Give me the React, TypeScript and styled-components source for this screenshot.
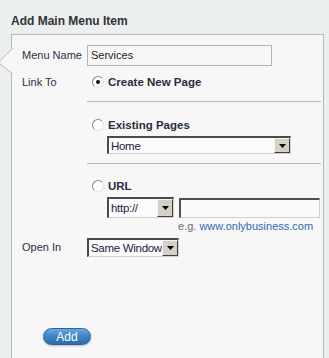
import React from "react";
import styled, { createGlobalStyle } from "styled-components";

const Global = createGlobalStyle`
  html, body { margin: 0; padding: 0; }
  body {
    background: #eceff0;
    font-family: "Liberation Sans", Arial, sans-serif;
    font-size: 11px;
    color: #2b2f3f;
    overflow: hidden;
    width: 329px;
    height: 358px;
  }
`;

const Page = styled.div`
  width: 329px;
  height: 358px;
  overflow: hidden;
`;

const Title = styled.h1`
  margin: 0;
  padding: 14px 0 0 11px;
  height: 20px;
  font-size: 12px;
  line-height: 14px;
  font-weight: bold;
  color: #333;
`;

const Panel = styled.div`
  position: relative;
  margin-left: 11px;
  width: 298px;
  min-height: 340px;
  background: #f7f7f7;
  border: 1px solid #b8b8b8;
  border-bottom: none;
  padding: 10px 3px 0 10px;
  box-sizing: content-box;
`;

const Pointer = styled.svg`
  position: absolute;
  left: -12px;
  top: 13px;
`;

const Row = styled.div<{ $mt?: number }>`
  display: flex;
  align-items: flex-start;
  margin-top: ${(p) => p.$mt ?? 0}px;
`;

const Label = styled.div<{ $h: number }>`
  width: 65px;
  flex: none;
  height: ${(p) => p.$h}px;
  line-height: ${(p) => p.$h}px;
  color: #2b2f45;
`;

const Content = styled.div`
  flex: 1;
  display: flex;
  flex-direction: column;
`;

const FlatInput = styled.div`
  box-sizing: border-box;
  width: 185px;
  height: 21px;
  border: 1px solid #b4b4b4;
  background: #f8f8f8;
  padding-left: 3px;
  line-height: 19px;
  color: #222;
`;

const InsetInput = styled.div<{ $w: number }>`
  box-sizing: border-box;
  width: ${(p) => p.$w}px;
  height: 20px;
  margin-top: 1px;
  border-style: solid;
  border-width: 2px 1px 1px 2px;
  border-color: #505050 #d4d0c8 #d4d0c8 #505050;
  background: #f9f9f9;
`;

const RadioLine = styled.div<{ $mt?: number }>`
  display: flex;
  align-items: center;
  height: 12px;
  margin-left: 5px;
  margin-top: ${(p) => p.$mt ?? 0}px;
`;

const Radio = styled.span<{ $checked?: boolean }>`
  position: relative;
  width: 10px;
  height: 10px;
  border-radius: 50%;
  border: 1px solid;
  border-color: #8a8a8a #e2e2e2 #e2e2e2 #8a8a8a;
  background: #fff;
  flex: none;
  &::after {
    content: "";
    display: ${(p) => (p.$checked ? "block" : "none")};
    position: absolute;
    left: 3px;
    top: 3px;
    width: 4px;
    height: 4px;
    border-radius: 50%;
    background: #111;
  }
`;

const RadioText = styled.span`
  margin-left: 4px;
  font-size: 11.5px;
  font-weight: bold;
  color: #2a2e40;
`;

const Rule = styled.div<{ $mt: number }>`
  height: 1px;
  background: #b8b8b8;
  margin-top: ${(p) => p.$mt}px;
  width: 234px;
`;

const SelectBox = styled.div<{ $w: number; $h: number; $ml?: number; $mt?: number }>`
  display: flex;
  box-sizing: border-box;
  width: ${(p) => p.$w}px;
  height: ${(p) => p.$h}px;
  margin-left: ${(p) => p.$ml ?? 0}px;
  margin-top: ${(p) => p.$mt ?? 0}px;
  border-style: solid;
  border-width: 2px 1px 1px 2px;
  border-color: #4a4a4a #d4d0c8 #d4d0c8 #4a4a4a;
  background: #fbfbfb;
`;

const SelectText = styled.div`
  flex: 1;
  padding-left: 2px;
  display: flex;
  align-items: center;
  color: #1c2240;
  font-size: 11.5px;
  letter-spacing: -0.3px;
  white-space: nowrap;
  overflow: hidden;
`;

const DropButton = styled.div`
  width: 16px;
  flex: none;
  box-sizing: border-box;
  background: #d4d0c8;
  border-style: solid;
  border-width: 1px;
  border-color: #f4f4f4 #404040 #404040 #f4f4f4;
  display: flex;
  align-items: center;
  justify-content: center;
`;

const UrlRow = styled.div`
  display: flex;
  gap: 5px;
  margin-left: 20px;
  margin-top: 5px;
`;

const Hint = styled.div`
  margin-left: 91px;
  margin-top: 2px;
  height: 13px;
  line-height: 13px;
  color: #6a6a6a;
`;

const Link = styled.span`
  color: #2f6db0;
`;

const AddButton = styled.button`
  margin: 71px 0 0 21px;
  width: 48px;
  height: 17px;
  padding: 0;
  border: 1px solid #2c6496;
  border-radius: 9px;
  background: linear-gradient(#6aaade 0%, #3f87c6 45%, #2d6ead 100%);
  box-shadow: 0 1px 2px rgba(0, 0, 0, 0.25);
  color: #fff;
  font-family: "Liberation Sans", Arial, sans-serif;
  font-size: 12px;
  line-height: 14px;
  display: block;
`;

const Arrow = () => (
  <svg width="7" height="4" viewBox="0 0 7 4">
    <polygon points="0,0 7,0 3.5,4" fill="#000" />
  </svg>
);

const Select = ({ value, w, h, ml, mt }: { value: string; w: number; h: number; ml?: number; mt?: number }) => (
  <SelectBox $w={w} $h={h} $ml={ml} $mt={mt}>
    <SelectText>{value}</SelectText>
    <DropButton>
      <Arrow />
    </DropButton>
  </SelectBox>
);

export default function App() {
  return (
    <Page>
      <Global />
      <Title>Add Main Menu Item</Title>
      <Panel>
        <Pointer width="13" height="26" viewBox="0 0 13 26">
          <polygon points="12,0 0,12 12,25" fill="#f7f7f7" />
          <polyline points="12.5,0.5 -1,13.5" stroke="#b8b8b8" fill="none" />
          <polyline points="-1,15.5 12.5,25.5" stroke="#b8b8b8" fill="none" />
        </Pointer>
        <Row>
          <Label $h={21}>Menu Name</Label>
          <FlatInput>Services</FlatInput>
        </Row>
        <Row $mt={10}>
          <Label $h={12}>Link To</Label>
          <Content>
            <RadioLine>
              <Radio $checked />
              <RadioText>Create New Page</RadioText>
            </RadioLine>
            <Rule $mt={13} />
            <RadioLine $mt={17}>
              <Radio />
              <RadioText>Existing Pages</RadioText>
            </RadioLine>
            <Select value="Home" w={184} h={18} ml={20} mt={5} />
            <Rule $mt={9} />
            <RadioLine $mt={16}>
              <Radio />
              <RadioText>URL</RadioText>
            </RadioLine>
            <UrlRow>
              <Select value="http://" w={67} h={21} />
              <InsetInput $w={141} />
            </UrlRow>
            <Hint>
              e.g. <Link>www.onlybusiness.com</Link>
            </Hint>
          </Content>
        </Row>
        <Row $mt={5}>
          <Label $h={19}>Open In</Label>
          <Select value="Same Window" w={92} h={19} />
        </Row>
        <AddButton>Add</AddButton>
      </Panel>
    </Page>
  );
}
